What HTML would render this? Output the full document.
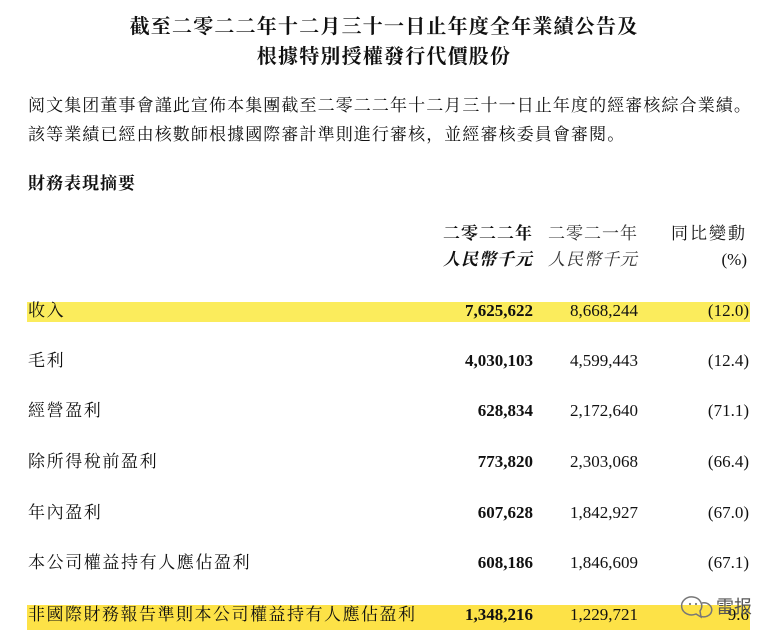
<!DOCTYPE html>
<html><head><meta charset="utf-8"><style>
body{margin:0;width:768px;height:637px;background:#fff;position:relative;overflow:hidden;font-family:"Liberation Serif","Noto Serif CJK SC",serif;color:#111}
.a{position:absolute;white-space:nowrap;line-height:1}
.t{font-size:20px;font-weight:bold;left:0;width:768px;text-align:center;letter-spacing:1.2px}
.p{font-size:17px;left:28px;letter-spacing:1.1px}
.r{text-align:right;font-size:17px}
.lab{left:28px;font-size:17px;letter-spacing:1.6px}
.b{font-weight:bold}
.hl{position:absolute;background:#fbec5c}
</style></head><body>
<div class="a t" style="top:17px">截至二零二二年十二月三十一日止年度全年業績公告及</div>
<div class="a t" style="top:47px">根據特別授權發行代價股份</div>
<div class="a p" style="top:97px">阅文集团董事會謹此宣佈本集團截至二零二二年十二月三十一日止年度的經審核綜合業績。</div>
<div class="a p" style="top:126px">該等業績已經由核數師根據國際審計準則進行審核，並經審核委員會審閱。</div>
<div class="a p b" style="top:175px;font-size:17px;letter-spacing:1px">財務表現摘要</div>

<div class="a r b" style="top:225px;right:235px;letter-spacing:1px">二零二二年</div>
<div class="a r b" style="top:251px;right:235px;font-style:italic;letter-spacing:1px">人民幣千元</div>
<div class="a r" style="top:225px;right:130px;letter-spacing:1px;color:#333">二零二一年</div>
<div class="a r" style="top:251px;right:130px;font-style:italic;letter-spacing:1px;color:#333">人民幣千元</div>
<div class="a r" style="top:225px;right:21px;letter-spacing:2px">同比變動</div>
<div class="a r" style="top:251px;right:21px">(%)</div>

<div class="hl" style="left:27px;top:302px;width:723px;height:20px"></div>
<div class="hl" style="left:27px;top:605px;width:723px;height:25px;background:#fde247"></div>

<div class="a lab" style="top:302px">收入</div>
<div class="a lab" style="top:352px">毛利</div>
<div class="a lab" style="top:402px">經營盈利</div>
<div class="a lab" style="top:453px">除所得稅前盈利</div>
<div class="a lab" style="top:504px">年內盈利</div>
<div class="a lab" style="top:554px">本公司權益持有人應佔盈利</div>
<div class="a lab" style="top:606px;letter-spacing:1.5px">非國際財務報告準則本公司權益持有人應佔盈利</div>

<div class="a r b" style="top:302px;right:235px">7,625,622</div>
<div class="a r b" style="top:352px;right:235px">4,030,103</div>
<div class="a r b" style="top:402px;right:235px">628,834</div>
<div class="a r b" style="top:453px;right:235px">773,820</div>
<div class="a r b" style="top:504px;right:235px">607,628</div>
<div class="a r b" style="top:554px;right:235px">608,186</div>
<div class="a r b" style="top:606px;right:235px">1,348,216</div>

<div class="a r" style="top:302px;right:130px">8,668,244</div>
<div class="a r" style="top:352px;right:130px">4,599,443</div>
<div class="a r" style="top:402px;right:130px">2,172,640</div>
<div class="a r" style="top:453px;right:130px">2,303,068</div>
<div class="a r" style="top:504px;right:130px">1,842,927</div>
<div class="a r" style="top:554px;right:130px">1,846,609</div>
<div class="a r" style="top:606px;right:130px">1,229,721</div>

<div class="a r" style="top:302px;right:19px">(12.0)</div>
<div class="a r" style="top:352px;right:19px">(12.4)</div>
<div class="a r" style="top:402px;right:19px">(71.1)</div>
<div class="a r" style="top:453px;right:19px">(66.4)</div>
<div class="a r" style="top:504px;right:19px">(67.0)</div>
<div class="a r" style="top:554px;right:19px">(67.1)</div>
<div class="a r" style="top:606px;right:19px">9.6</div>

<svg class="a" style="left:680px;top:594px" width="34" height="28" viewBox="0 0 34 28"><g fill="none" stroke="#777" stroke-width="1.5"><path d="M13 3a10 9 0 1 0 3 17l5 3-1-6a10 9 0 0 0-7-14z"/><path d="M22 9a8 7 0 1 1-2 13"/></g><circle cx="10" cy="10" r="1.1" fill="#777"/><circle cx="16" cy="10" r="1.1" fill="#777"/></svg>
<div class="a" style="left:716px;top:597px;font-size:18px;color:#555;font-family:'Noto Sans CJK SC',sans-serif">雷报</div>
</body></html>
